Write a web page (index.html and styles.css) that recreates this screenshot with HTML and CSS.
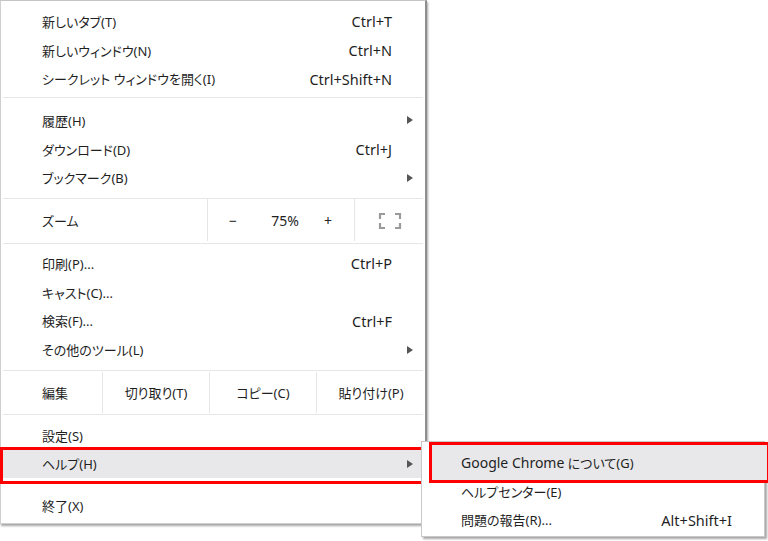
FILE: index.html
```html
<!DOCTYPE html>
<html lang="ja">
<head>
<meta charset="utf-8">
<link rel="stylesheet" href="styles.css">
</head>
<body>
<div class="stage">
  <div class="menu">
    <div class="item"><span class="label">新しいタブ(T)</span><span class="key">Ctrl+T</span></div>
    <div class="item"><span class="label">新しいウィンドウ(N)</span><span class="key">Ctrl+N</span></div>
    <div class="item"><span class="label">シークレット ウィンドウを開く(I)</span><span class="key">Ctrl+Shift+N</span></div>
    <div class="sep s1"></div>
    <div class="item"><span class="label">履歴(H)</span><span class="arrow"></span></div>
    <div class="item"><span class="label">ダウンロード(D)</span><span class="key">Ctrl+J</span></div>
    <div class="item"><span class="label">ブックマーク(B)</span><span class="arrow"></span></div>
    <div class="sep s2"></div>
    <div class="zoomrow">
      <span class="zlabel">ズーム</span>
      <div class="zctrl">
        <span class="zbtn">−</span>
        <span class="zval">75%</span>
        <span class="zbtn">+</span>
      </div>
      <div class="zfull">
        <svg width="24" height="18" viewBox="0 0 24 18" fill="none" stroke="#9a9a9a" stroke-width="2.2">
          <path d="M2 7V2h5M17 2h5v5M22 11v5h-5M7 16H2v-5"/>
        </svg>
      </div>
    </div>
    <div class="sep s3"></div>
    <div class="item"><span class="label">印刷(P)...</span><span class="key">Ctrl+P</span></div>
    <div class="item"><span class="label">キャスト(C)...</span></div>
    <div class="item"><span class="label">検索(F)...</span><span class="key">Ctrl+F</span></div>
    <div class="item"><span class="label">その他のツール(L)</span><span class="arrow"></span></div>
    <div class="sep s4"></div>
    <div class="editrow">
      <span class="elabel">編集</span>
      <span class="ebtn">切り取り(T)</span>
      <span class="ebtn">コピー(C)</span>
      <span class="ebtn">貼り付け(P)</span>
    </div>
    <div class="sep s5"></div>
    <div class="item"><span class="label">設定(S)</span></div>
    <div class="item hover marked"><span class="label">ヘルプ(H)</span><span class="arrow"></span></div>
    <div class="sep s6"></div>
    <div class="item"><span class="label">終了(X)</span></div>
  </div>
  <div class="submenu">
    <div class="item marked2"><span class="label"><span class="latin">Google Chrome</span> について(G)</span></div>
    <div class="item"><span class="label">ヘルプセンター(E)</span></div>
    <div class="item"><span class="label">問題の報告(R)...</span><span class="key">Alt+Shift+I</span></div>
  </div>
</div>
</body>
</html>
```

FILE: styles.css
```css
* { box-sizing: border-box; }
html, body { margin: 0; padding: 0; background: #fff; }
body {
  font-family: "Noto Sans", "Noto Sans CJK JP", sans-serif;
  font-size: 13px;
  font-feature-settings: "palt" 1;
  color: #1f1f1f;
  width: 768px;
  height: 541px;
  overflow: hidden;
}
.stage { position: relative; width: 768px; height: 541px; }

.menu {
  width: 427px;
  height: 524px;
  background: #fff;
  border-left: 1px solid #cfcfcf;
  border-top: 1px solid #c4c4c4;
  border-right: 2px solid #8e8e8e;
  border-bottom: 1px solid #cfcfcf;
  box-shadow: 1px 2px 2px rgba(0,0,0,0.35);
  padding-top: 6px;
  display: flex;
  flex-direction: column;
}
.item {
  height: 28.7px;
  display: flex;
  align-items: center;
  padding-left: 41px;
  padding-right: 33px;
  position: relative;
  flex: none;
}
.label { flex: 1; white-space: nowrap; position: relative; z-index: 1; }
.latin { font-size: 14px; }
.key { white-space: nowrap; position: relative; z-index: 1; font-size: 14.5px; }
.arrow {
  width: 0; height: 0;
  border-left: 6px solid #555;
  border-top: 4px solid transparent;
  border-bottom: 4px solid transparent;
  margin-right: -21px;
  position: relative;
  z-index: 1;
}
.sep { height: 1px; background: #e6e6e6; margin: 0 2px; flex: none; }
.s1 { margin-top: 4px; margin-bottom: 8px; }
.s2 { margin-top: 6px; margin-bottom: 0; }
.s3 { margin-top: 0; margin-bottom: 5px; }
.s4 { margin-top: 6px; margin-bottom: 0; }
.s5 { margin-top: 0; margin-bottom: 6px; }
.s6 { margin-top: 5px; margin-bottom: 7px; }

.zoomrow {
  height: 44px;
  display: flex;
  flex: none;
}
.zlabel {
  width: 207px;
  padding-left: 41px;
  display: flex;
  align-items: center;
  border-right: 1px solid #e6e6e6;
  margin-bottom: 2px;
}
.zctrl {
  width: 147px;
  display: grid;
  grid-template-columns: 50px 54px 32px 11px;
  align-items: center;
  text-align: center;
  border-right: 1px solid #e6e6e6;
  margin-bottom: 2px;
  font-size: 14px;
}
.zbtn { color: #222; }
.zfull {
  flex: 1;
  display: flex;
  align-items: center;
  justify-content: center;
  padding-bottom: 1px;
}

.editrow {
  height: 43px;
  display: flex;
  flex: none;
}
.elabel {
  width: 102px;
  padding-left: 41px;
  display: flex;
  align-items: center;
  border-right: 1px solid #e6e6e6;
  margin: 1px 0 1px;
}
.ebtn {
  width: 107px;
  display: flex;
  align-items: center;
  justify-content: center;
  border-right: 1px solid #e6e6e6;
  margin: 1px 0 1px;
  white-space: nowrap;
}
.ebtn:last-child { border-right: none; flex: 1; }

.hover { background: #e8e8ea; }
.marked::after {
  content: "";
  position: absolute;
  left: -1px; top: -3px;
  width: 419px; height: 31px;
  border: 3px solid #f00;
}

.submenu {
  position: absolute;
  left: 421px;
  top: 441px;
  width: 344px;
  height: 96px;
  background: #fff;
  border: 1px solid #c8c8c8;
  box-shadow: 2px 2px 2px rgba(0,0,0,0.35);
  padding-top: 6px;
}
.submenu .item { padding-left: 39px; padding-right: 32px; }
.marked2::after {
  content: "";
  position: absolute;
  left: 7px; top: -6px;
  width: 335px; height: 35px;
  border: 3px solid #f00;
  background: #e8e8ea;
}
```
